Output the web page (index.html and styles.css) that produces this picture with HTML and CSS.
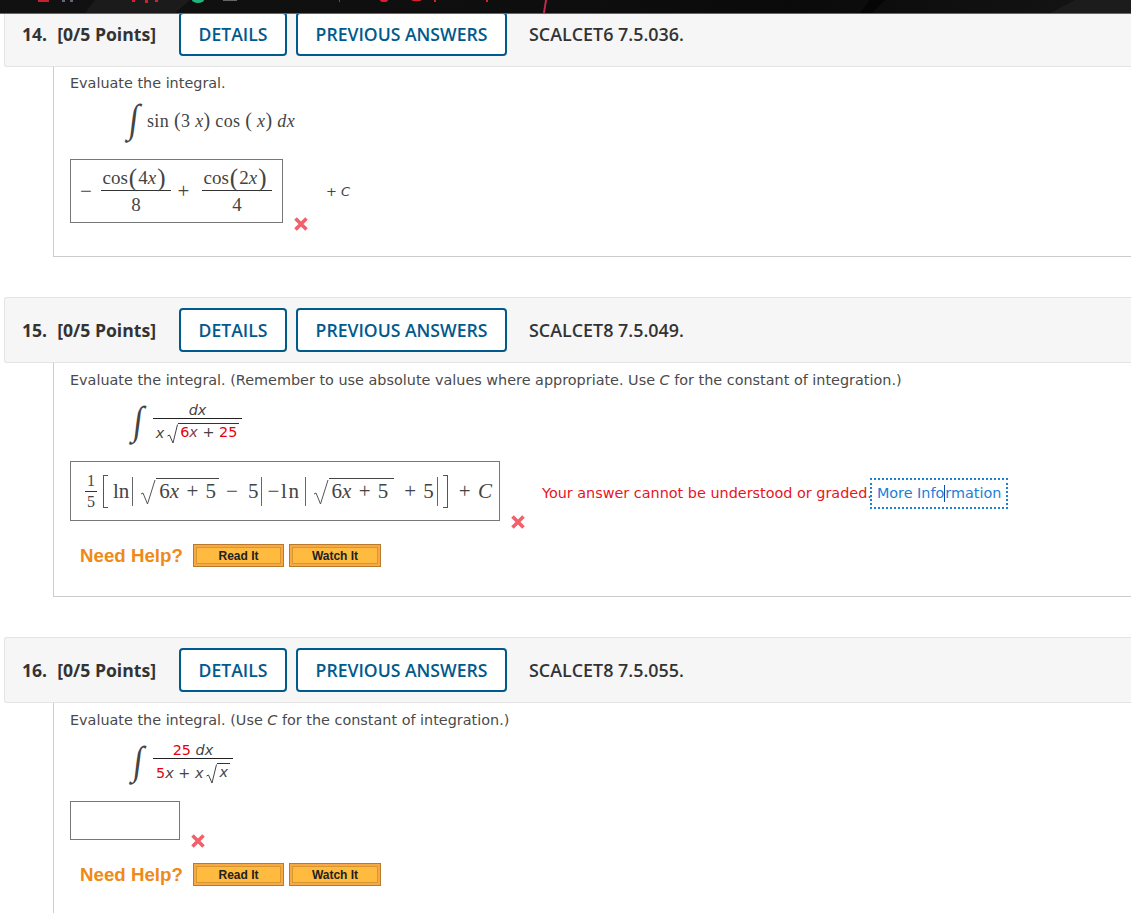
FILE: index.html
```html
<!DOCTYPE html>
<html lang="en">
<head>
<meta charset="utf-8">
<title>Assignment</title>
<link rel="stylesheet" href="styles.css">
</head>
<body>
<div class="topbar">
  <svg class="topbar-art" width="1131" height="13" viewBox="0 0 1131 13">
    <polygon points="85,13 95,0 190,0 175,13" fill="#1b1b1b"/>
    <polygon points="860,13 870,0 885,0 872,13" fill="#050505"/>
    <polygon points="1050,13 1075,0 1131,0 1131,13" fill="#1c1c1c"/>
    <rect x="38" y="0" width="11" height="2" fill="#c8202c"/>
    <rect x="62" y="0" width="3" height="2" fill="#667"/>
    <rect x="70" y="0" width="3" height="2" fill="#667"/>
    <rect x="132" y="0" width="3" height="2" fill="#d8202c"/>
    <rect x="145" y="0" width="3" height="3" fill="#d8202c"/>
    <rect x="155" y="0" width="3" height="2" fill="#d8202c"/>
    <path d="M192 0a6 3 0 0 0 12 0z" fill="#1fb57d"/>
    <rect x="223" y="0" width="14" height="1" fill="#666"/>
    <rect x="339" y="0" width="1" height="2" fill="#c8202c"/>
    <path d="M380 0a4 2 0 0 0 8 0z" fill="#d8202c"/>
    <path d="M411 0a6 2 0 0 0 11 0z" fill="#d8202c"/>
    <rect x="434" y="0" width="2" height="2" fill="#d8202c"/>
    <rect x="486" y="0" width="2" height="2" fill="#d8202c"/>
    <polygon points="543,13 545,0 547,0 545,13" fill="#c2284c"/>
  </svg>
</div>

<section class="question">
  <header class="q-head">
    <span class="q-label"><span class="q-num">14.</span>[0/5 Points]</span>
    <a class="q-btn btn-details">DETAILS</a>
    <a class="q-btn btn-prev">PREVIOUS ANSWERS</a>
    <span class="q-code">SCALCET6 7.5.036.</span>
  </header>
  <div class="q-body body-14">
    <p class="prompt">Evaluate the integral.</p>
    <div class="integral-row">
      <span class="int-sign">∫</span>
      <span class="serif-expr">sin <span class="paren">(</span>3 <i>x</i><span class="paren">)</span> cos <span class="paren">(</span> <i>x</i><span class="paren">)</span> <i>dx</i></span>
    </div>
    <div class="answer-row">
      <div class="answer box-14">
        <span class="op op-minus">−</span>
        <span class="frac mfrac"><span class="num">cos<span class="bigp">(</span>4<i>x</i><span class="bigp">)</span></span><span class="den">8</span></span>
        <span class="op op-plus">+</span>
        <span class="frac mfrac"><span class="num">cos<span class="bigp">(</span>2<i>x</i><span class="bigp">)</span></span><span class="den">4</span></span>
      </div>
      <svg class="xmark" viewBox="0 0 16 16"><path d="M2.5 2.5 13.5 13.5M13.5 2.5 2.5 13.5"/></svg>
      <span class="plus-c">+ <i>C</i></span>
    </div>
  </div>
</section>

<section class="question">
  <header class="q-head">
    <span class="q-label"><span class="q-num">15.</span>[0/5 Points]</span>
    <a class="q-btn btn-details">DETAILS</a>
    <a class="q-btn btn-prev">PREVIOUS ANSWERS</a>
    <span class="q-code">SCALCET8 7.5.049.</span>
  </header>
  <div class="q-body body-15">
    <p class="prompt">Evaluate the integral. (Remember to use absolute values where appropriate. Use <i>C</i> for the constant of integration.)</p>
    <div class="integral-row">
      <span class="int-sign">∫</span>
      <span class="frac sfrac frac-15"><span class="num"><i>dx</i></span><span class="den"><i>x</i><svg class="rad" viewBox="0 0 12 20"><path d="M1 12 3 11 6.5 19 11 .5"/></svg><span class="radicand"><span class="red">6</span><i class="redx">x</i> + <span class="red">25</span></span></span></span>
    </div>
    <div class="answer-row">
      <div class="answer box-15">
        <span class="frac tfrac"><span class="num">1</span><span class="den">5</span></span>
        <span class="fence fence-l"></span><span class="ln-a">ln</span><span class="bar bar-a"></span>
        <svg class="mrad" viewBox="0 0 16 26"><path d="M1 15 3 14 7.5 25 15 1"/></svg><span class="mradicand">6<i>x</i> + 5</span>
        <span class="gap-op">− 5</span><span class="bar bar-b"></span><span class="ln-b">−ln</span><span class="bar bar-c"></span>
        <svg class="mrad" viewBox="0 0 16 26"><path d="M1 15 3 14 7.5 25 15 1"/></svg><span class="mradicand mradicand-2">6<i>x</i> + 5</span>
        <span class="gap-op gap-op-2">+ 5</span><span class="bar bar-d"></span><span class="fence fence-r"></span><span class="tail">+ <i>C</i></span>
      </div>
      <svg class="xmark" viewBox="0 0 16 16"><path d="M2.5 2.5 13.5 13.5M13.5 2.5 2.5 13.5"/></svg>
      <span class="error">Your answer cannot be understood or graded.<a class="more">More Info<span class="caret"></span>rmation</a></span>
    </div>
    <div class="help">
      <span class="help-label">Need Help?</span>
      <a class="help-btn read">Read It</a>
      <a class="help-btn watch">Watch It</a>
    </div>
  </div>
</section>

<section class="question">
  <header class="q-head">
    <span class="q-label"><span class="q-num">16.</span>[0/5 Points]</span>
    <a class="q-btn btn-details">DETAILS</a>
    <a class="q-btn btn-prev">PREVIOUS ANSWERS</a>
    <span class="q-code">SCALCET8 7.5.055.</span>
  </header>
  <div class="q-body body-16">
    <p class="prompt">Evaluate the integral. (Use <i>C</i> for the constant of integration.)</p>
    <div class="integral-row">
      <span class="int-sign">∫</span>
      <span class="frac sfrac frac-16"><span class="num"><span class="red">25</span>&nbsp;<i>dx</i></span><span class="den"><span class="red">5</span><i>x</i> + <i>x</i><svg class="rad" viewBox="0 0 12 20"><path d="M1 12 3 11 6.5 19 11 .5"/></svg><span class="radicand"><i>x</i></span></span></span>
    </div>
    <div class="answer-row">
      <div class="answer box-16"></div>
      <svg class="xmark" viewBox="0 0 16 16"><path d="M2.5 2.5 13.5 13.5M13.5 2.5 2.5 13.5"/></svg>
    </div>
    <div class="help">
      <span class="help-label">Need Help?</span>
      <a class="help-btn read">Read It</a>
      <a class="help-btn watch">Watch It</a>
    </div>
  </div>
</section>
</body>
</html>
```
FILE: styles.css
```css
html, body { margin: 0; padding: 0; background: #fff; }
body {
  height: 913px;
  overflow: hidden;
  position: relative;
  padding-top: 1px;
  box-sizing: border-box;
  font-family: "DejaVu Sans", sans-serif;
  font-size: 14.4px;
  color: #4a4a4a;
}
.topbar {
  position: absolute;
  top: 0; left: 0; right: 0;
  height: 13px;
  z-index: 2;
  background: linear-gradient(90deg, #111 0%, #0e0e0e 50%, #0a0a0a 70%, #151515 100%);
  box-shadow: 0 1px 0 #666;
}
.topbar-art { display: block; }

.question { margin-bottom: 40px; }
.q-head {
  margin-left: 4px;
  height: 66px;
  box-sizing: border-box;
  background: #f6f6f6;
  border: 1px solid #e4e4e4;
  border-right: 0;
  border-radius: 3px 0 0 3px;
  display: flex;
  align-items: center;
  padding-left: 17px;
  font-family: "Open Sans", sans-serif;
  font-weight: 600;
  font-size: 17.6px;
  color: #333;
}
.q-label { width: 157px; font-size: 17.6px; font-weight: 700; white-space: nowrap; }
.q-num { margin-right: 10px; }
.q-btn {
  height: 44px;
  box-sizing: border-box;
  border: 2px solid #005a8c;
  border-radius: 4px;
  background: #fff;
  color: #005a8c;
  display: flex;
  align-items: center;
  justify-content: center;
  white-space: nowrap;
}
.btn-details { width: 108px; margin-right: 9px; }
.btn-prev { width: 211px; margin-right: 22px; }
.q-code { white-space: nowrap; font-size: 17.9px; }

.q-body {
  margin-left: 53px;
  border-left: 1px solid #ccc;
  border-bottom: 1px solid #ccc;
  padding-left: 16px;
  box-sizing: border-box;
}
.body-14 { height: 190px; }
.body-15 { height: 234px; }
.body-16 { height: 234px; border-bottom: 0; }
.prompt { margin: 0; line-height: 20px; padding-top: 7px; white-space: nowrap; }
.body-14 .prompt { padding-top: 6px; }

.integral-row { display: flex; align-items: center; margin: 8px 0 0 58px; height: 46px; color: #444; }
.body-14 .integral-row { margin-top: 3px; }
.int-sign {
  font-family: "Liberation Serif", serif;
  font-size: 40px;
  line-height: 46px;
  width: 21px;
  margin-left: 4px;
  color: #444;
  transform: skewX(-7deg) scaleX(.85);
  transform-origin: center;
}
.body-14 .int-sign { width: 19px; margin-left: 0; }
.serif-expr { font-family: "Liberation Serif", serif; font-size: 18px; letter-spacing: .35px; white-space: pre; margin-top: 2px; }
.paren { font-size: 20px; }

.frac { display: inline-flex; flex-direction: column; align-items: center; }
.num, .den { display: flex; align-items: center; justify-content: center; white-space: pre; }
.sfrac { color: #444; }
.sfrac .num { border-bottom: 1px solid #222; width: 100%; height: 21px; padding-top: 3px; box-sizing: border-box; }
.sfrac .den { height: 25px; padding: 2px 0 0; box-sizing: border-box; }
.frac-15 { width: 89px; }
.frac-16 { width: 80px; }
.red { color: #e8000d; }
.redx { color: #8a3a3f; }
.rad { width: 13px; height: 20px; margin: 2px -1px 0 2px; fill: none; stroke: #444; stroke-width: 1; }
.radicand { border-top: 1px solid #333; line-height: 17px; padding: 0 2px; margin-top: -1px; }

.answer-row { display: flex; position: relative; margin-top: 17px; }
.answer {
  border: 1px solid #777;
  box-sizing: border-box;
  display: flex;
  align-items: center;
  font-family: "Liberation Serif", serif;
  font-size: 19px;
  color: #444;
  white-space: pre;
}
.xmark { width: 16px; height: 16px; fill: none; stroke: #f2606c; stroke-width: 3.6; flex: none; align-self: flex-end; }

.box-14 { width: 213px; height: 64px; padding-left: 9px; }
.body-14 .xmark { margin: 0 0 -9px 10px; }
.op { font-size: 21px; }
.op-minus { width: 21px; }
.op-plus { width: 13px; margin: 0 12px 0 6px; text-align: center; }
.mfrac { width: 70px; }
.mfrac .num { width: 100%; border-bottom: 1px solid #333; height: 28px; box-sizing: border-box; padding: 3px 3px 0 0; }
.mfrac .den { height: 28px; }
.bigp { font-size: 25px; line-height: 24px; margin: 0 1px; }
.plus-c { position: absolute; left: 256px; top: 25px; font-size: 13px; color: #444; }

.body-15 .answer-row { height: 70px; }
.box-15 { width: 430px; height: 60px; padding-left: 14px; font-size: 21px; word-spacing: 2px; }
.tfrac { width: 12px; font-size: 16px; margin-right: 6px; }
.tfrac .num { width: 100%; border-bottom: 1px solid #333; height: 21px; box-sizing: border-box; }
.tfrac .den { height: 20px; }
.fence { width: 5px; height: 33px; box-sizing: border-box; border: 1px solid #555; flex: none; }
.fence-l { border-right: 0; margin-right: 5px; }
.fence-r { border-left: 0; margin-left: 5px; }
.bar { width: 1px; height: 29px; background: #666; flex: none; }
.bar-a { margin: 0 0 0 3px; }
.bar-b { margin: 0 6px 0 2px; }
.bar-c { margin: 0 0 0 4px; }
.bar-d { margin: 0 0 0 3px; }
.ln-b { letter-spacing: 1.6px; }
.mrad { width: 16px; height: 26px; fill: none; stroke: #555; stroke-width: 1; margin: 1px 0 0 7px; flex: none; }
.mradicand { border-top: 1px solid #444; line-height: 24px; margin-top: -2px; padding: 0 3px; }
.mradicand-2 { padding-right: 6px; }
.gap-op { margin-left: 7px; word-spacing: 5px; }
.gap-op-2 { margin-left: 10px; word-spacing: 2px; }
.tail { margin-left: 11px; word-spacing: 2px; }
.body-15 .xmark { position: absolute; left: 440px; top: 53px; }
.error {
  position: absolute;
  left: 472px;
  top: 24px;
  color: #e8141e;
  white-space: nowrap;
  line-height: 17px;
}
.more {
  color: #1b80d8;
  display: inline-block;
  outline: 2px dotted #1b80d8;
  outline-offset: 5px;
  margin-left: 5px;
  position: relative;
}
.caret { display: inline-block; width: 1px; height: 17px; background: #0c4ea8; vertical-align: -4px; }

.help { display: flex; align-items: center; margin-left: 10px; height: 23px; }
.body-15 .help { margin-top: 13px; }
.body-16 .help { margin-top: 23px; }
.help-label {
  font-family: "Liberation Sans", sans-serif;
  font-weight: 700;
  font-size: 18.7px;
  color: #ef8a17;
  width: 113px;
  white-space: nowrap;
}
.help-btn {
  height: 23px;
  box-sizing: border-box;
  border: 1px solid #b87a2c;
  box-shadow: inset 0 0 0 2px #f8a845, inset 0 0 0 3px #d9962f;
  background: #ffbb3f;
  font-family: "Liberation Sans", sans-serif;
  font-weight: 700;
  font-size: 12px;
  color: #222;
  display: flex;
  align-items: center;
  justify-content: center;
}
.read { width: 91px; margin-right: 5px; }
.watch { width: 92px; }

.box-16 { width: 110px; height: 39px; }
.body-16 .xmark { margin: 0 0 -9px 10px; }
```
